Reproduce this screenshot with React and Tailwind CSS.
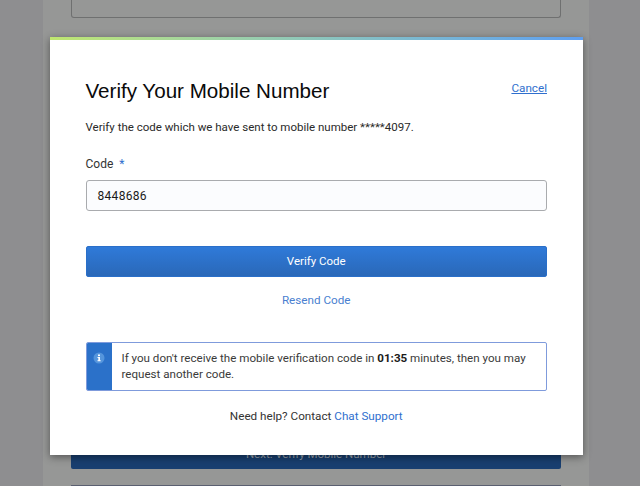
export default function App() {
  return (
    <div className="relative h-[486px] w-[640px] overflow-hidden bg-[#8e8e90]" style={{ fontFamily: 'Roboto, "Liberation Sans", sans-serif' }}>
      <div className="mx-auto flex h-full w-[546px] -translate-x-[4px] flex-col items-center bg-[#969796]">
        <div className="h-[18px] w-[490px] shrink-0 rounded-b-[3px] border border-t-0 border-[#6f7070]" />
        <div className="mt-[419px] flex h-[32px] w-[490px] shrink-0 items-center justify-center rounded-[2px] bg-[#193f70] pt-[3px] text-[11.5px] text-[#9aa3ad]">
          Next: Verify Mobile Number
        </div>
        <div className="mt-[16px] h-px w-[490px] shrink-0 bg-[#5a5f70]" />
      </div>
      <div className="absolute left-[50px] top-[37px] flex h-[418px] w-[533px] flex-col bg-white shadow-[0_2px_8px_rgba(0,0,0,0.45)]">
        <div className="h-[3px] shrink-0 bg-gradient-to-r from-[#bfe66f] to-[#5f9ff0]" />
        <div className="flex flex-1 flex-col pl-[35.5px] pr-[36px]">
          <div className="mt-[36px] flex items-start justify-between">
            <h1 className="text-[20.6px] leading-[30px] text-[#0a0a0a]" style={{ fontFamily: '"Liberation Sans", sans-serif' }}>Verify Your Mobile Number</h1>
            <a className="mt-[3px] text-[11.7px] leading-[18px] text-[#2f6fce] underline">Cancel</a>
          </div>
          <p className="mt-[12px] text-[11.5px] leading-[18px] text-[#2a2a2a]">
            Verify the code which we have sent to mobile number *****4097.
          </p>
          <label className="mt-[19px] text-[12px] leading-[18px] text-[#333333]">
            Code <span className="ml-[3px] text-[#2f6fce]">*</span>
          </label>
          <div className="mt-[7px] flex h-[31px] items-center rounded-[3px] border border-[#a9abae] bg-[#fbfcfe] px-[11px] text-[12px] tracking-[0.3px] text-[#1a1a1a]">
            8448686
          </div>
          <button className="mt-[35px] h-[31px] rounded-[2px] border border-[#2a6fc9] bg-gradient-to-b from-[#2f7ad9] to-[#2a68b8] text-[11.5px] text-white">
            Verify Code
          </button>
          <a className="mt-[14px] text-center text-[11.7px] leading-[18px] text-[#4a7fd0]">Resend Code</a>
          <div className="mt-[33px] flex h-[49px] overflow-hidden rounded-[2px] border border-[#7f9bdc]">
            <div className="flex w-[25px] shrink-0 justify-center bg-[#2b71c9] pt-[9px]">
              <svg width="12" height="12" viewBox="0 0 12 12">
                <circle cx="6" cy="6" r="5.5" fill="#5595dc" />
                <rect x="5" y="2.5" width="2" height="1.6" fill="#fff" />
                <path d="M4.5 5h2.5v3.2h.7v1H4.5v-1h.8V6h-.8z" fill="#fff" />
              </svg>
            </div>
            <p className="pl-[10px] pr-[10px] pt-[7px] text-[11.6px] leading-[16px] text-[#3a3a3a]">
              If you don't receive the mobile verification code in <b className="font-bold text-[#1a1a1a]">01:35</b> minutes, then you may request another code.
            </p>
          </div>
          <p className="mt-[16px] text-center text-[11.7px] leading-[18px] text-[#333333]">
            Need help? Contact <a className="text-[#2f6fce]">Chat Support</a>
          </p>
        </div>
      </div>
    </div>
  );
}
